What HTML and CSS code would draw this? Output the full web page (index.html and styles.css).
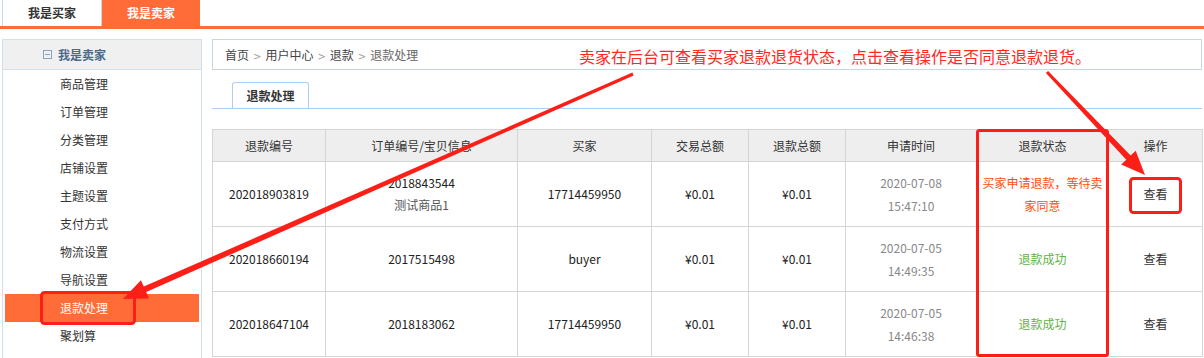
FILE: index.html
```html
<!DOCTYPE html>
<html lang="zh-CN">
<head>
  <meta charset="UTF-8">
  <title>退款处理</title>
  <meta name="viewport" content="width=device-width, initial-scale=1.0">
  <link rel="stylesheet" href="styles.css">
</head>
<body>
  <div class="topnav">
    <a href="#" class="buyer">我是买家</a>
    <a href="#" class="seller active">我是卖家</a>
  </div>

  <div class="layout">
    <!-- 左侧菜单 -->
    <div class="side">
      <div class="side-head"><span class="fold"></span>我是卖家</div>
      <ul class="side-list">
        <li><a href="#">商品管理</a></li>
        <li><a href="#">订单管理</a></li>
        <li><a href="#">分类管理</a></li>
        <li><a href="#">店铺设置</a></li>
        <li><a href="#">主题设置</a></li>
        <li><a href="#">支付方式</a></li>
        <li><a href="#">物流设置</a></li>
        <li><a href="#">导航设置</a></li>
        <li class="active"><a href="#">退款处理</a></li>
        <li><a href="#">聚划算</a></li>
      </ul>
    </div>

    <div class="main">
      <div class="crumb">
        <a href="#">首页</a><span class="sep">&gt;</span><a href="#">用户中心</a><span class="sep">&gt;</span><a href="#">退款</a><span class="sep">&gt;</span><span class="cur">退款处理</span>
      </div>
      <div class="tabs">
        <span class="tab">退款处理</span>
      </div>
      <table class="refunds">
        <colgroup>
          <col style="width:113px"><col style="width:192px"><col style="width:134px"><col style="width:97px">
          <col style="width:97px"><col style="width:131px"><col style="width:132px"><col style="width:94px">
        </colgroup>
        <thead>
          <tr>
            <th>退款编号</th><th>订单编号/宝贝信息</th><th>买家</th><th>交易总额</th>
            <th>退款总额</th><th>申请时间</th><th>退款状态</th><th>操作</th>
          </tr>
        </thead>
        <tbody>
          <tr>
            <td>202018903819</td>
            <td>2018843544<br><span class="goods">测试商品1</span></td>
            <td>17714459950</td>
            <td>¥0.01</td>
            <td>¥0.01</td>
            <td class="time">2020-07-08<br>15:47:10</td>
            <td class="status wait">买家申请退款，等待卖家同意</td>
            <td><a href="#" class="view">查看</a></td>
          </tr>
          <tr>
            <td>202018660194</td>
            <td>2017515498</td>
            <td>buyer</td>
            <td>¥0.01</td>
            <td>¥0.01</td>
            <td class="time">2020-07-05<br>14:49:35</td>
            <td class="status done">退款成功</td>
            <td><a href="#" class="view">查看</a></td>
          </tr>
          <tr>
            <td>202018647104</td>
            <td>2018183062</td>
            <td>17714459950</td>
            <td>¥0.01</td>
            <td>¥0.01</td>
            <td class="time">2020-07-05<br>14:46:38</td>
            <td class="status done">退款成功</td>
            <td><a href="#" class="view">查看</a></td>
          </tr>
        </tbody>
      </table>
    </div>
  </div>

  <!-- 标注 -->
  <div class="note">卖家在后台可查看买家退款退货状态，点击查看操作是否同意退款退货。</div>
  <svg class="marks" width="1204" height="358" viewBox="0 0 1204 358">
    <g fill="none" stroke="#fb1f17" stroke-width="3">
      <rect x="41.5" y="292.5" width="93" height="31" rx="3"/>
      <rect x="977.5" y="130.5" width="130" height="225" rx="2"/>
      <rect x="1130.5" y="178.5" width="50" height="34" rx="3"/>
    </g>
    <g fill="#fb1f17">
      <polygon points="633.6,75.4 146.2,292.1 149.0,298.5 123,299 140.9,280.2 143.8,286.6 632.4,72.6"/>
      <polygon points="1048.1,70.9 1130.6,155.6 1135.7,150.7 1145,175 1121.2,164.5 1126.3,159.7 1045.9,73.1"/>
    </g>
  </svg>
</body>
</html>
```

FILE: styles.css
```css
html, body { height: 100%; }
body { margin: 0; font-family: "Noto Sans CJK SC", "Microsoft YaHei", sans-serif; font-size: 12px; color: #333; background: #fff; position: relative; overflow: hidden; }
a { color: #333; text-decoration: none; }
ul { list-style: none; margin: 0; padding: 0; }

.topnav { display: flex; padding-left: 2px; height: 26px; border-bottom: 3px solid #ff6c37; }
.topnav a { display: block; line-height: 26px; text-align: center; font-weight: bold; }
.topnav .buyer { width: 98px; border-left: 1px solid #c9d8e7; border-right: 1px solid #c9d8e7; }
.topnav .seller { width: 98px; }
.topnav a.active { background: #ff6c37; color: #fff; }

.layout { display: flex; align-items: flex-start; gap: 10px; padding: 10px 0 0 2px; }

.side { width: 198px; height: 330px; border: 1px solid #d3e1ee; }
.side-head { display: flex; align-items: center; gap: 6px; height: 29px; padding-left: 40px; background: #f0f0f0; border-bottom: 1px solid #d3e1ee; color: #4a6a8c; font-weight: bold; }
.fold { width: 7px; height: 7px; border: 1px solid #8aa4bd; position: relative; }
.fold::after { content: ""; position: absolute; left: 1px; right: 1px; top: 3px; height: 1px; background: #8aa4bd; }
.side-list li { margin: 0 2px; height: 28px; line-height: 28px; padding-left: 55px; }
.side-list li.active { background: #ff6c37; }
.side-list li.active a { color: #fff; }

.main { width: 990px; }
.crumb { height: 29px; line-height: 29px; padding-left: 12px; border: 1px solid #c6d6e2; color: #444; }
.crumb a { color: #444; }
.crumb .sep { color: #a0a0a0; margin: 0 4px; font-family: "DejaVu Sans", sans-serif; font-size: 10px; }
.crumb .cur { color: #666; }

.tabs { margin-top: 12px; padding-left: 20px; border-bottom: 1px solid #a9d0f2; display: flex; }
.tab { width: 75px; height: 25px; line-height: 26px; text-align: center; border: 1px solid #a9d0f2; border-bottom: none; border-radius: 3px 3px 0 0; font-weight: bold; }

.refunds { margin-top: 20px; width: 990px; border-collapse: collapse; table-layout: fixed; }
.refunds th, .refunds td { border: 1px solid #d5d5d5; text-align: center; padding: 0; }
.refunds th { height: 31px; background: #eee; font-weight: normal; color: #333; }
.refunds td { height: 64px; line-height: 22px; color: #222; }
.refunds .goods { color: #555; }
.refunds .time { color: #888; line-height: 23px; }
.refunds .status.wait { color: #ff4d0a; padding: 0 4px; line-height: 23px; }
.refunds .status.done { color: #5fb346; }
.refunds .view { color: #333; }

.note { position: absolute; left: 579px; top: 45px; font-size: 16px; line-height: 22px; color: #ff2a1e; white-space: nowrap; }
.marks { position: absolute; left: 0; top: 0; pointer-events: none; }
```
